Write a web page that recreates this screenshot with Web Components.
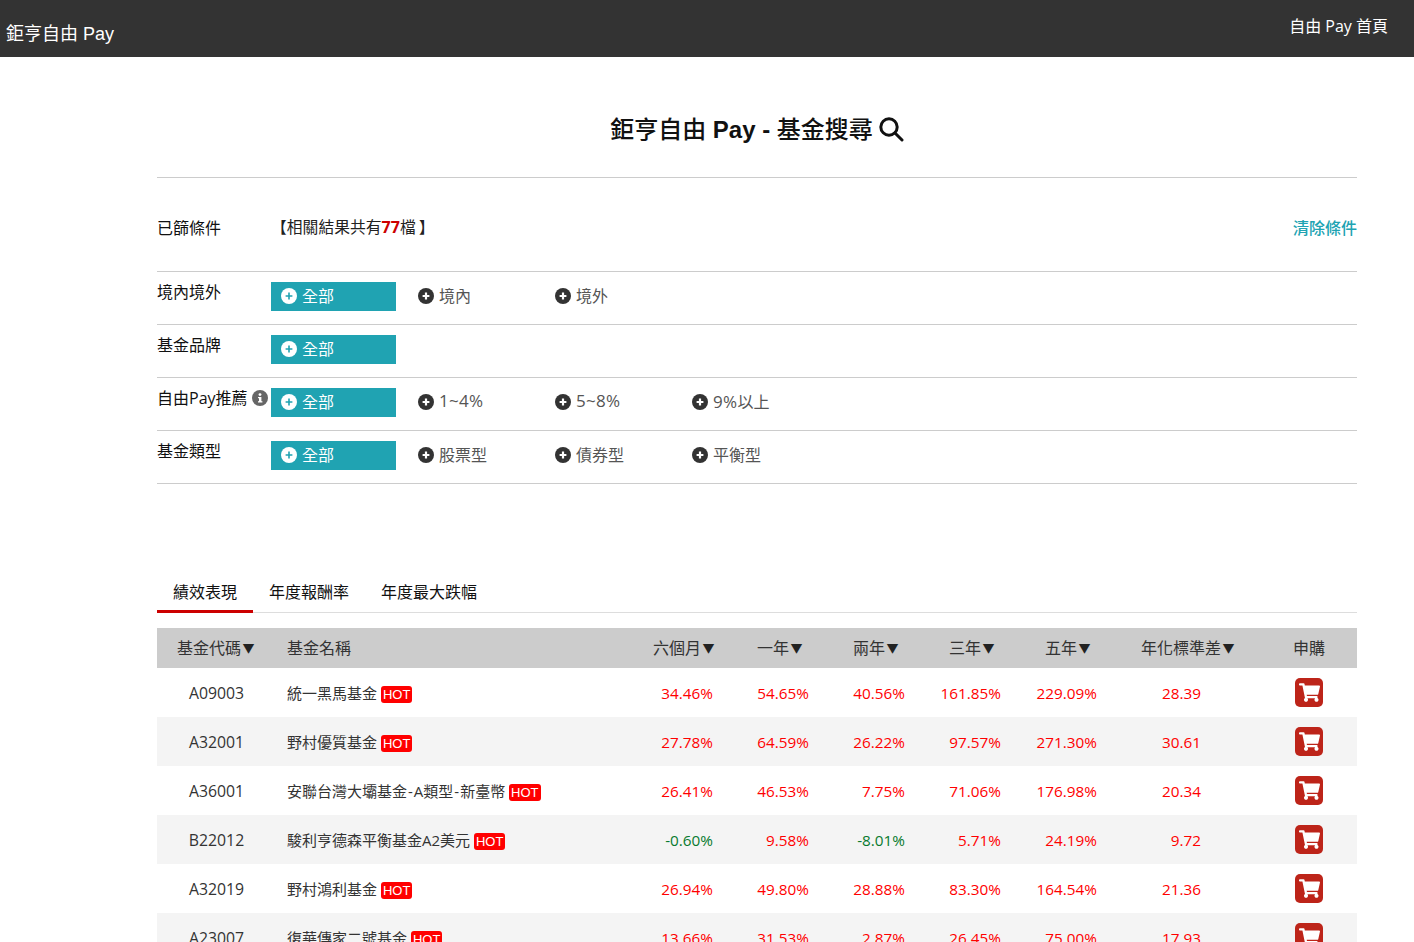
<!DOCTYPE html>
<html lang="zh-Hant">
<head>
<meta charset="utf-8">
<title>鉅亨自由 Pay - 基金搜尋</title>
<style>
  html, body { margin: 0; height: 942px; overflow: hidden; background: #fff; }
  body { font-family: "Open Sans", "Noto Sans CJK TC", sans-serif; color: #222; }
</style>
</head>
<body>
<site-header brand="鉅亨自由 Pay" link="自由 Pay 首頁"></site-header>
<search-page>
  <applied-row slot="filters" total="77"></applied-row>
  <filter-row slot="filters" label="境內境外">
    <filter-option active>全部</filter-option>
    <filter-option>境內</filter-option>
    <filter-option>境外</filter-option>
  </filter-row>
  <filter-row slot="filters" label="基金品牌">
    <filter-option active>全部</filter-option>
  </filter-row>
  <filter-row slot="filters" label="自由Pay推薦" info>
    <filter-option active>全部</filter-option>
    <filter-option latin>1~4%</filter-option>
    <filter-option latin>5~8%</filter-option>
    <filter-option latin>9%<span style="font-size:16px;letter-spacing:0">以上</span></filter-option>
  </filter-row>
  <filter-row slot="filters" label="基金類型">
    <filter-option active>全部</filter-option>
    <filter-option>股票型</filter-option>
    <filter-option>債券型</filter-option>
    <filter-option>平衡型</filter-option>
  </filter-row>

  <tab-bar slot="results">
    <tab-item active>績效表現</tab-item>
    <tab-item>年度報酬率</tab-item>
    <tab-item>年度最大跌幅</tab-item>
  </tab-bar>
  <fund-table slot="results">
    <fund-row code="A09003" name="統一黑馬基金" values="34.46%,54.65%,40.56%,161.85%,229.09%,28.39"></fund-row>
    <fund-row code="A32001" name="野村優質基金" values="27.78%,64.59%,26.22%,97.57%,271.30%,30.61"></fund-row>
    <fund-row code="A36001" name="安聯台灣大壩基金-A類型-新臺幣" values="26.41%,46.53%,7.75%,71.06%,176.98%,20.34"></fund-row>
    <fund-row code="B22012" name="駿利亨德森平衡基金A2美元" values="-0.60%,9.58%,-8.01%,5.71%,24.19%,9.72"></fund-row>
    <fund-row code="A32019" name="野村鴻利基金" values="26.94%,49.80%,28.88%,83.30%,164.54%,21.36"></fund-row>
    <fund-row code="A23007" name="復華傳家二號基金" values="13.66%,31.53%,2.87%,26.45%,75.00%,17.93"></fund-row>
  </fund-table>
</search-page>

<script>
const FONT = '"Open Sans", "Noto Sans CJK TC", sans-serif';

class SiteHeader extends HTMLElement {
  connectedCallback() {
    this.attachShadow({ mode: 'open' }).innerHTML = `
      <style>
        :host { display: flex; justify-content: space-between; height: 57px; background: #333; color: #fff; font-family: "Liberation Sans", "Noto Sans CJK TC", sans-serif; }
        .brand { font-size: 18px; line-height: 25px; padding: 22px 0 0 6px; }
        .link { font-family: ${FONT}; font-size: 16px; line-height: 22px; padding: 15px 26px 0 0; }
      </style>
      <div class="brand">${this.getAttribute('brand')}</div>
      <div class="link">${this.getAttribute('link')}</div>`;
  }
}
customElements.define('site-header', SiteHeader);

class SearchPage extends HTMLElement {
  connectedCallback() {
    this.attachShadow({ mode: 'open' }).innerHTML = `
      <style>
        :host { display: block; width: 1200px; margin-left: 157px; }
        h1 { display: flex; justify-content: center; align-items: center; gap: 6px; margin: 0; height: 121px; padding-top: 25px; box-sizing: border-box; border-bottom: 1px solid #ccc; font: 500 24px/32px "Liberation Sans", "Noto Sans CJK TC", sans-serif; color: #111; white-space: pre; }
        h1 b { font-weight: bold; }
        svg { width: 25px; height: 25px; display: block; }
        .results { padding-top: 86px; }
      </style>
      <h1><span>鉅亨自由 <b>Pay -</b> 基金搜尋</span>
        <svg viewBox="0 0 25 25" fill="none" stroke="#111" stroke-width="3"><circle cx="10" cy="10" r="8.2"/><path d="M16 16 L23 23" stroke-linecap="round"/></svg>
      </h1>
      <slot name="filters"></slot>
      <div class="results"><slot name="results"></slot></div>`;
  }
}
customElements.define('search-page', SearchPage);

class AppliedRow extends HTMLElement {
  connectedCallback() {
    this.attachShadow({ mode: 'open' }).innerHTML = `
      <style>
        :host { display: flex; align-items: center; height: 94px; padding-top: 4px; box-sizing: border-box; border-bottom: 1px solid #ccc; font-size: 16px; color: #111; }
        .label { width: 114px; }
        .total { flex: 1; font-size: 15.8px; color: #222; }
        .close { margin-left: 3px; }
        b { color: #c00; font-size: 16px; }
        a { color: #20a3b2; font-weight: 500; }
      </style>
      <div class="label">已篩條件</div>
      <div class="total">【相關結果共有<b>${this.getAttribute('total')}</b>檔<span class="close">】</span></div>
      <a>清除條件</a>`;
  }
}
customElements.define('applied-row', AppliedRow);

class FilterRow extends HTMLElement {
  connectedCallback() {
    const info = this.hasAttribute('info') ? `
      <svg viewBox="0 0 16 16"><circle cx="8" cy="8" r="8" fill="#666"/><rect x="7" y="7" width="2.4" height="5" fill="#fff"/><rect x="6" y="11.2" width="4.4" height="1.3" fill="#fff"/><rect x="6" y="7" width="2" height="1.2" fill="#fff"/><circle cx="8" cy="4.6" r="1.4" fill="#fff"/></svg>` : '';
    this.attachShadow({ mode: 'open' }).innerHTML = `
      <style>
        :host { display: flex; height: 53px; box-sizing: border-box; border-bottom: 1px solid #ccc; }
        .label { display: flex; align-items: flex-start; gap: 4px; width: 114px; flex: none; padding-top: 9px; font-size: 16px; line-height: 22px; color: #111; white-space: nowrap; box-sizing: border-box; }
        svg { width: 16px; height: 16px; margin-top: 3px; flex: none; }
        .options { display: flex; gap: 12px; padding-top: 10px; }
      </style>
      <div class="label">${this.getAttribute('label')}${info}</div>
      <div class="options"><slot></slot></div>`;
  }
}
customElements.define('filter-row', FilterRow);

class FilterOption extends HTMLElement {
  connectedCallback() {
    const active = this.hasAttribute('active');
    this.attachShadow({ mode: 'open' }).innerHTML = `
      <style>
        :host { display: flex; align-items: center; gap: 5px; width: 125px; height: 29px; padding: 0 0 2px 10px; box-sizing: border-box; font-size: 16px; color: #555; }
        :host([active]) { background: #20a3b2; color: #fff; }
        :host([latin]) { font-size: 17px; letter-spacing: .3px; }
        svg { width: 16px; height: 16px; flex: none; }
        span { margin-top: -2px; }
      </style>
      <svg viewBox="0 0 16 16">
        <circle cx="8" cy="8" r="8" fill="${active ? '#fff' : '#333'}"/>
        <path d="M8 4.6v6.8M4.6 8h6.8" stroke="${active ? '#20a3b2' : '#fff'}" stroke-width="${active ? 1.6 : 2.2}"/>
      </svg>
      <span><slot></slot></span>`;
  }
}
customElements.define('filter-option', FilterOption);

class TabBar extends HTMLElement {
  connectedCallback() {
    this.attachShadow({ mode: 'open' }).innerHTML = `
      <style>:host { display: flex; height: 43px; box-sizing: border-box; border-bottom: 1px solid #ddd; }</style>
      <slot></slot>`;
  }
}
customElements.define('tab-bar', TabBar);

class TabItem extends HTMLElement {
  connectedCallback() {
    this.attachShadow({ mode: 'open' }).innerHTML = `
      <style>
        :host { display: block; height: 43px; box-sizing: border-box; padding: 11px 16px 0; font-size: 16px; line-height: 22px; color: #111; }
        :host([active]) { border-bottom: 3px solid #c00; }
      </style>
      <slot></slot>`;
  }
}
customElements.define('tab-item', TabItem);

const COLUMNS = 'grid-template-columns: 130px 346px repeat(5, 96px) 148px 96px;';

class FundTable extends HTMLElement {
  connectedCallback() {
    const sort = ['六個月', '一年', '兩年', '三年', '五年'];
    const arrow = '<span class="arrow">▼</span>';
    this.attachShadow({ mode: 'open' }).innerHTML = `
      <style>
        :host { display: block; margin-top: 15px; }
        .head { display: grid; ${COLUMNS} height: 40px; padding-bottom: 2px; box-sizing: border-box; align-items: center; background: #ccc; font-size: 16px; color: #333; }
        .head div { white-space: nowrap; }
        .code { padding-left: 20px; }
        .sort { text-align: center; padding-left: 7px; }
        .std { padding-left: 28px; }
        .buy { text-align: center; }
        .arrow { display: inline-block; width: 15px; text-align: center; font-size: 12px; color: #222; vertical-align: 1px; }
        ::slotted(fund-row:nth-child(even)) { background: #f4f4f4; }
      </style>
      <div class="head">
        <div class="code">基金代碼${arrow}</div>
        <div>基金名稱</div>
        ${sort.map(s => `<div class="sort">${s}${arrow}</div>`).join('')}
        <div class="std">年化標準差${arrow}</div>
        <div class="buy">申購</div>
      </div>
      <slot></slot>`;
  }
}
customElements.define('fund-table', FundTable);

class FundRow extends HTMLElement {
  connectedCallback() {
    const values = this.getAttribute('values').split(',');
    const name = this.getAttribute('name').replace(/-/g, '<span class="dash">-</span>');
    const cell = (v, i) => `<div class="num ${v.startsWith('-') ? 'down' : ''} ${i === 5 ? 'stdv' : ''}">${v}</div>`;
    this.attachShadow({ mode: 'open' }).innerHTML = `
      <style>
        :host { display: grid; ${COLUMNS} height: 49px; align-items: center; font-size: 15px; color: #333; }
        .code { text-align: center; padding-right: 11px; font-size: 15.8px; }
        .name { white-space: nowrap; }
        .dash { padding: 0 1px; }
        .hot { display: inline-block; padding: 0 2px; height: 17px; line-height: 17px; border-radius: 3px; background: #f00; color: #fff; font: 13px/17px "Liberation Sans", sans-serif; }
        .num { text-align: right; padding-right: 16px; color: #f00; font-size: 15.3px; }
        .down { color: #087a2e; }
        .stdv { padding-right: 60px; }
        .buy { display: flex; justify-content: center; }
        .cart { width: 28px; height: 29px; border-radius: 5px; background: #bd2419; display: flex; align-items: center; justify-content: center; }
        svg { width: 21px; height: 19px; display: block; }
      </style>
      <div class="code">${this.getAttribute('code')}</div>
      <div class="name">${name} <span class="hot">HOT</span></div>
      ${values.map(cell).join('')}
      <div class="buy"><div class="cart">
        <svg viewBox="0 0 576 512"><path fill="#fff" d="M528.12 301.319l47.273-208C578.806 78.301 567.391 64 551.99 64H159.208l-9.166-44.81C147.758 8.021 137.93 0 126.529 0H24C10.745 0 0 10.745 0 24v16c0 13.255 10.745 24 24 24h69.883l70.248 343.435C147.325 417.1 136 435.222 136 456c0 30.928 25.072 56 56 56s56-25.072 56-56c0-15.674-6.447-29.835-16.824-40h209.647C430.447 426.165 424 440.326 424 456c0 30.928 25.072 56 56 56s56-25.072 56-56c0-22.172-12.888-41.332-31.579-50.405l5.517-24.276c3.413-15.018-8.002-29.319-23.403-29.319H218.117l-6.545-32h293.145c11.206 0 20.92-7.754 23.403-18.681z"/></svg>
      </div></div>`;
  }
}
customElements.define('fund-row', FundRow);
</script>
</body>
</html>
